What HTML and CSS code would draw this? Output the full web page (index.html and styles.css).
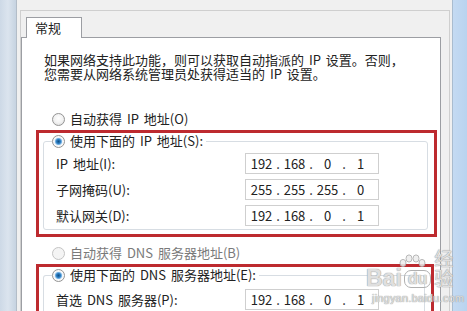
FILE: index.html
```html
<!DOCTYPE html>
<html>
<head>
<meta charset="utf-8">
<title>常规</title>
<link rel="stylesheet" href="styles.css">
</head>
<body>
  <div class="window">
    <div class="frame">
      <div class="tabs"><div class="tab">常规</div></div>
      <div class="page">
        <div class="intro">
          <div>如果网络支持此功能，则可以获取自动指派的 IP 设置。否则，</div>
          <div>您需要从网络系统管理员处获得适当的 IP 设置。</div>
        </div>

        <div class="radio-row"><span class="radio"></span>自动获得 IP 地址(O)</div>

        <div class="mark">
          <fieldset class="group">
            <legend><span class="radio on"></span>使用下面的 IP 地址(S):</legend>
            <div class="field first">
              <span class="label">IP 地址(I):</span>
              <div class="ip"><span>192</span><i>.</i><span>168</span><i>.</i><span>0</span><i>.</i><span>1</span></div>
            </div>
            <div class="field">
              <span class="label">子网掩码(U):</span>
              <div class="ip"><span>255</span><i>.</i><span>255</span><i>.</i><span>255</span><i>.</i><span>0</span></div>
            </div>
            <div class="field">
              <span class="label">默认网关(D):</span>
              <div class="ip"><span>192</span><i>.</i><span>168</span><i>.</i><span>0</span><i>.</i><span>1</span></div>
            </div>
          </fieldset>
        </div>

        <div class="radio-row disabled"><span class="radio"></span>自动获得 DNS 服务器地址(B)</div>

        <div class="mark mark-dns">
          <fieldset class="group">
            <legend><span class="radio on"></span>使用下面的 DNS 服务器地址(E):</legend>
            <div class="field first-dns">
              <span class="label">首选 DNS 服务器(P):</span>
              <div class="ip"><span>192</span><i>.</i><span>168</span><i>.</i><span>0</span><i>.</i><span>1</span></div>
            </div>
          </fieldset>
        </div>
      </div>
    </div>
  </div>

  <div class="watermark">
    <svg class="paw" width="30" height="18" viewBox="0 0 30 18">
      <ellipse cx="6" cy="9" rx="3" ry="3.6" />
      <ellipse cx="12" cy="4.5" rx="3" ry="3.6" />
      <ellipse cx="19" cy="4.5" rx="3" ry="3.6" />
      <ellipse cx="25" cy="9" rx="3" ry="3.6" />
    </svg>
    <div class="wm-line"><span class="wm-bai">Bai</span><span class="wm-du">du</span><span class="wm-jy">经验</span></div>
    <div class="wm-url">jingyan.baidu.com</div>
  </div>
</body>
</html>
```

FILE: styles.css
```css
html,body{margin:0;padding:0;height:311px;overflow:hidden;}
body{background:linear-gradient(to right,#cdd9e6 0,#dbe4ee 8px,#c6d3e1 16px,#c6d3e1 452px,#c4daf2 453px,#b9d3ef 467px);font-family:"Noto Sans CJK SC","Liberation Sans",sans-serif;font-size:13px;color:#222;position:relative;word-spacing:2px;}

.window{margin-left:16px;width:437px;height:311px;box-sizing:border-box;background:#f0f0f0;border-left:1px solid #b3bdc8;border-right:1px solid #a9bccf;padding:10px 2px 0 3px;overflow:hidden;}
.frame{height:100%;box-sizing:border-box;border:1px solid #cfcfcf;border-bottom:none;padding-top:6px;display:flex;flex-direction:column;}

.tabs{display:flex;padding-left:5px;flex:none;}
.tab{background:#fff;border:1px solid #9c9ea3;border-bottom:none;height:20px;line-height:20px;padding:0 20px 0 8px;margin-bottom:-1px;position:relative;}

.page{flex:1;min-height:0;background:#fff;border:1px solid #9c9ea3;border-bottom:none;margin-right:8px;box-sizing:border-box;padding:15px 0 0 14px;overflow:hidden;}

.intro{margin-left:8px;white-space:nowrap;}
.intro div{height:14px;line-height:14px;}

.radio-row{display:flex;align-items:center;height:16px;line-height:16px;margin:30px 0 0 16px;}
.radio{display:inline-block;width:11px;height:11px;border:1px solid #949494;border-radius:50%;background:radial-gradient(circle at 50% 40%,#fff 0,#f2f2f2 50%,#d6d6d6 100%);margin-right:5px;flex:none;}
.radio.on{background:radial-gradient(circle,#0e4f86 0,#2b7bbf 2px,#7fb8e6 3.2px,#eef4fa 4px,#fafafa 5px,#d8d8d8 100%);}
.disabled{color:#7a7a7a;margin-top:8px;}
.disabled .radio{border-color:#c4c4c4;background:#f4f4f4;}

.mark{border:3px solid #bd2a2f;margin-top:3px;width:401px;box-sizing:border-box;padding:0 6px 4px 4px;}
.mark-dns{width:398px;padding-bottom:0;border-bottom:none;height:47px;}

.group{margin:0;border:1px solid #d7dde3;border-radius:3px;padding:0 0 1px 12px;min-width:0;}
.mark-dns .group{border-bottom:none;}
.group legend{display:flex;align-items:center;height:16px;line-height:16px;padding:0 3px 0 0;margin-left:-4px;}

.field{display:flex;align-items:center;height:26px;}
.field.first{margin-top:1px;}
.field.first-dns{margin-top:3px;}
.label{width:189px;flex:none;}

.ip{width:134px;height:21px;box-sizing:border-box;border:1px solid #cfcfcf;background:#fff;display:flex;align-items:center;padding-left:1px;line-height:19px;word-spacing:0;}
.ip span{width:29px;text-align:center;}
.ip i{width:4px;font-style:normal;text-align:center;}

.watermark{position:absolute;left:366px;top:254px;width:100px;color:rgba(236,236,236,0.85);text-shadow:0 0 1px #9a9a9a,0 0 1px #9a9a9a;font-family:"Liberation Sans",sans-serif;word-spacing:0;}
.paw{display:block;margin-left:31px;fill:rgba(236,236,236,0.85);stroke:#a8a8a8;stroke-width:0.8;}
.wm-line{display:flex;align-items:flex-end;height:20px;margin-top:-4px;}
.wm-bai{font-size:23px;line-height:20px;font-weight:bold;}
.wm-du{font-size:16px;line-height:15px;font-weight:bold;border:1px solid #b0b0b0;border-radius:7px;padding:0 3px 1px;margin-left:2px;}
.wm-jy{font-size:19px;line-height:20px;margin-left:3px;font-family:"Noto Sans CJK SC",sans-serif;}
.wm-url{font-size:11px;margin-top:4px;margin-left:6px;letter-spacing:0.2px;}
```
